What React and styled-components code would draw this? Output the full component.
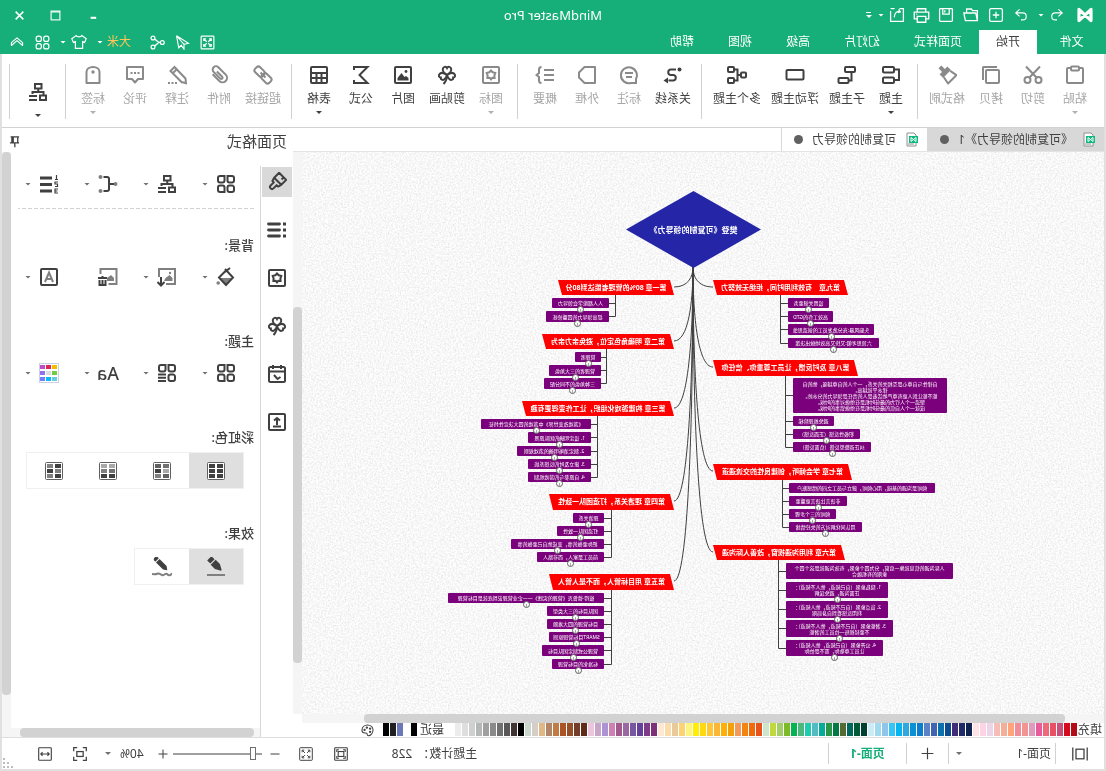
import React, { useState } from "react";
import styled, { createGlobalStyle, css } from "styled-components";

const GREEN = "#16ae79";
const INK = "#404040";
const FONT = '"Noto Sans", "Noto Sans CJK SC", sans-serif';

const GlobalStyle = createGlobalStyle`
  * { box-sizing: border-box; }
  body { margin: 0; background: #ffffff; }
  button, select, input { font: inherit; color: inherit; }
  button { border: 0; padding: 0; background: none; cursor: pointer; }
`;

/* the whole window is flipped, like in a selfie recording */
const Window = styled.div`
  display: flex;
  flex-direction: column;
  min-height: 100vh;
  transform: scaleX(-1);
  background: #ffffff;
  color: ${INK};
  font-family: ${FONT};
  font-size: 12px;
  line-height: 16px;
`;

/* ---------- icons, all on a 20 x 20 grid ---------- */

const Svg = styled.svg`
  display: block;
  flex: none;
  width: ${p => p.$size || 20}px;
  height: ${p => p.$size || 20}px;
  fill: none;
  stroke: currentColor;
  stroke-width: ${p => p.$stroke || 2};
  .f { fill: currentColor; stroke: none; }
  .g { fill: #808080; stroke: none; }
  .gs { stroke: #808080; }
`;

const clover = (
  <>
    <path d="M10 10C7 8 5.500 6 5.800 4c.4-2.400 3.200-3 4.200-1 1-2 3.800-1.400 4.200 1 .3 2-1.200 4-4.200 6z" />
    <path d="M10 10c-2.600-2-5.400-2.600-7-1.400-2 1.600-1 4 .8 4-.4 2 2 3 3.600 1.700C9 13 9.700 11.600 10 10z" />
    <path d="M10 10c2.600-2 5.400-2.600 7-1.400 2 1.600 1 4-.8 4 .4 2-2 3-3.600 1.700C11 13 10.300 11.600 10 10z" />
    <path d="M10 10c0 4 1 6.500 3.500 9" />
  </>
);

const flower = (
  <path d="M10 5.500l1.700 1.800 2.600.6-.9 2.400.2 2.600-2.300-.2L10 14.400l-1.300-1.700-2.300.2.2-2.600-.9-2.400 2.600-.6z" />
);

const grid4 = (
  <>
    <path d="M4 2h4.500v4.500a2 2 0 0 1-2 2H4a2 2 0 0 1-2-2V4a2 2 0 0 1 2-2z" />
    <path d="M11.500 2H16a2 2 0 0 1 2 2v2.500a2 2 0 0 1-2 2h-2.500a2 2 0 0 1-2-2z" />
    <path d="M4 11.500h2.500a2 2 0 0 1 2 2V16a2 2 0 0 1-2 2H4a2 2 0 0 1-2-2v-2.500a2 2 0 0 1 2-2z" />
    <path d="M13.500 11.500H16a2 2 0 0 1 2 2V16a2 2 0 0 1-2 2h-4.500v-4.500a2 2 0 0 1 2-2z" />
  </>
);

const arrows4 = (
  <path d="M5 5l3.500 3.500M15 5l-3.500 3.500M5 15l3.500-3.500M15 15l-3.500-3.500" />
);

const ICONS = {
  logo: <path d="M2.500 3v14L17.500 3v14L2.500 3z" strokeLinejoin="round" />,
  undo: <path d="M8 2L2.500 7 8 12M3 7h9.500a5 5 0 0 1 0 10H10" />,
  redo: <path d="M12 2l5.500 5-5.500 5M17 7H7.500a5 5 0 0 0 0 10H10" />,
  add: <><rect x="2" y="2" width="16" height="16" rx="2" /><path d="M10 6v8M6 10h8" /></>,
  folder: <path d="M2 17V4.500h6l1.500-2h6V7M2 17L4 7.500h15L17 17z" />,
  save: <><rect x="2" y="2" width="16" height="16" rx="1" /><path d="M6 2v7h8V2M11.500 4v3" /></>,
  print: <><path d="M5 6V2h10v4M5 14H1.500V6h17v8H15" /><path d="M5 11h10v7H5zM15 8.500h1" /></>,
  exportFile: <path d="M7 2H2v16h16V5M18 2h-5M8 3L6 6l3 1M6.500 6c4-1 6.500 1.500 7 7" />,
  fullscreen: <><rect x="1.500" y="1.500" width="17" height="17" rx="1" /><path d="M5 8V5h3M12 5h3v3M15 12v3h-3M8 15H5v-3M5 5l4 4M15 5l-4 4M15 15l-4-4M5 15l4-4" /></>,
  send: <path d="M18 1L2 11l6 1.500L18 1zM18 1l-3 16-4-4M8 12.500V19l3.500-5" />,
  share: <><circle cx="16" cy="4" r="2.600" /><circle cx="3.600" cy="10" r="2.600" /><circle cx="16" cy="16" r="2.600" /><path d="M6.200 10c5 0 3.500-3 8-4.500M6.200 10c5 0 3.500 3 8 4.500" /></>,
  shirt: <path d="M6.500 2L1 6l2 4.500 2.500-1V18h9V9.500l2.500 1L19 6l-5.500-4c-1 2-6 2-7 0z" />,
  apps: <><rect x="1.500" y="1.500" width="7" height="7" rx="3" /><rect x="11.500" y="1.500" width="7" height="7" rx="3" /><rect x="1.500" y="11.500" width="7" height="7" rx="3" /><rect x="11.500" y="11.500" width="7" height="7" rx="3" /></>,
  collapse: <path d="M2 11l8-7 8 7v4l-8-7-8 7z" strokeLinejoin="round" />,
  min: <path d="M4 14h8" strokeWidth="3" />,
  max: <><rect x="2" y="2" width="16" height="16" /><path d="M2 3.500h16" /></>,
  close: <path d="M3 3l14 14M17 3L3 17" />,

  paste: <><path d="M6 3H3a1 1 0 0 0-1 1v13a1 1 0 0 0 1 1h14a1 1 0 0 0 1-1V4a1 1 0 0 0-1-1h-3" /><rect x="6" y="1.500" width="8" height="4" rx="1" /></>,
  cut: <><circle cx="4.500" cy="15" r="3" /><circle cx="15.500" cy="15" r="3" /><path d="M3 1.500l10.500 11M17 1.500L6.500 12.500" /></>,
  copy: <><rect x="2" y="5" width="13" height="13" rx="1" /><path d="M4 2h13.500a.5.500 0 0 1 .5.500V15" /></>,
  brush: <g transform="rotate(45 10 9)"><path className="f" d="M8 -1h4v5h3.500v5h-11V4H8z" /><path d="M5.500 9L4 16.500h12L14.500 9" strokeLinejoin="round" /></g>,
  topic: <><rect x="7" y="2" width="11" height="5.500" rx="1" /><rect x="7" y="12.500" width="11" height="5.500" rx="1" /><path d="M7 4.500H2v10.500h5" /></>,
  subtopic: <><rect x="2" y="2" width="10" height="5" rx="1" /><rect x="8.500" y="13" width="10" height="5" rx="1" /><path d="M5.500 7v8.500h3" /></>,
  floating: <rect x="1.500" y="5" width="17" height="9.500" rx="1" />,
  multi: <><rect x="1" y="7.500" width="5" height="5" rx="1" /><rect x="13" y="2" width="6" height="5" rx="1" /><rect x="13" y="13" width="6" height="5" rx="1" /><path d="M6 10h3.500M13 4.500H9.500v11H13" /></>,
  relation: <><circle className="f" cx="3.500" cy="4.500" r="2" /><path d="M7 4.500h5.500a2.800 2.800 0 0 1 0 5.500h-3a2.800 2.800 0 0 0 0 5.500h5" /><path className="f" d="M15 12.500l4.500 3-4.500 3z" /></>,
  callout: <><path d="M3 18v-4a8 8 0 1 1 5 4z" /><path d="M6 8h8M7 12h6" /></>,
  boundary: <path d="M2 2h10.500L18 7.500v5L12.500 18H2z" strokeLinejoin="round" />,
  summary: <><path d="M1 5h10M1 10h10M1 15h10" /><path d="M13.500 2c2 0 2.500.6 2.500 2.500V8l2.500 2-2.500 2v3.500c0 1.900-.5 2.500-2.500 2.500" /></>,
  sticker: <><rect x="2" y="2" width="16" height="16" rx="1" />{flower}</>,
  clipart: clover,
  picture: <><rect x="2" y="2" width="16" height="16" rx="1" /><path className="f" d="M4.500 15.500V13l2.500-2 1.500 1 3-4 4 5v2.500z" /><circle className="f" cx="7" cy="6.500" r="1.400" /></>,
  formula: <path d="M17 5V2H3.500l8 8-8 8H17v-3" />,
  table: <><rect x="2" y="2" width="16" height="16" rx="1" /><path d="M2 8h16M2 13h16M7.500 8v10M12.500 8v10" /></>,
  link: <g transform="rotate(-45 10 10)"><rect x="0" y="6.500" width="10.500" height="7" rx="2.500" /><rect x="9.500" y="6.500" width="10.500" height="7" rx="2.500" /><path d="M6.500 10h7" /></g>,
  clip: <g transform="rotate(45 10 10)"><path d="M14 5v9.500a4.500 4.500 0 0 1-9 0V4a3.300 3.300 0 0 1 6.600 0v9.500a1.300 1.300 0 0 1-2.600 0V6" /></g>,
  note: <><path d="M1.500 13.500L12.500 2l4 4L5.500 17l-4.500 1.200z" /><path d="M10.500 4.500l4 4" /><path d="M10 18h2M13.500 18h2M17 18h2" /></>,
  comment: <><path d="M2 2h16v12h-5l-3 3.500L7 14H2z" strokeLinejoin="round" /><path className="f" d="M5.500 7h2v2h-2zM9 7h2v2H9zM12.500 7h2v2h-2z" /></>,
  tag: <><path d="M3.500 18V7c0-3 3-5 6.500-5s6.500 2 6.500 5v11z" strokeLinejoin="round" /><circle className="f" cx="10" cy="7" r="1.700" /></>,
  org: <><rect x="6.500" y="2" width="6.500" height="4.500" /><path d="M9.750 6.500V10M4.500 13v-3h11v2M11 14h8M11 18h8" /><rect x="2" y="13.500" width="6" height="4.500" /></>,

  format: <g transform="rotate(-45 10 10)"><path d="M5 2h10v7H5zM5 9l1 3.500h2V17a2 2 0 0 0 4 0v-4.500h2L15 9M8.500 2v3" strokeLinejoin="round" /></g>,
  outline: <><path d="M7.500 4h11M7.500 10h11M7.500 16h11" strokeWidth="2.800" strokeLinecap="round" /><path d="M1 4h3M1 10h3M1 16h3" strokeWidth="2.800" /></>,
  calendar: <><rect x="2" y="3" width="16" height="15" rx="1.500" /><path d="M2 7.500h16M6 1v4M14 1v4M13 11l-3.500 4-3-2" /></>,
  upload: <><rect x="2" y="2" width="16" height="16" rx="1" /><path d="M10 13V6M7 8.500L10 6l3 2.500M6 14.500h8" /></>,
  grid4,
  branch: <><circle className="g" cx="2.500" cy="10" r="2" /><circle className="g" cx="17.500" cy="3" r="2" /><circle className="g" cx="17.500" cy="17" r="2" /><path d="M4 10h5M14.500 3H11c-1.300 0-2 .7-2 2v10c0 1.300.7 2 2 2h3.500" /></>,
  numbers: <><path d="M7 4h12M7 10.500h12M7 17h12" strokeWidth="2.800" /><path d="M2.500 1v4.500M1 5.500h3M1 8h3v2H1.500v2.500H4M1 15h3v4H1M1.500 17H4" strokeWidth="1.200" /></>,
  bucket: <><path className="g" d="M4 11h12l-6 7z" /><path d="M9.500 3L17 10.500 10 18l-7-7.500L11 2M6 1l6.500 5" /><circle className="g" cx="17.800" cy="16" r="1.800" /></>,
  bgImage: <><path className="gs" d="M11 17h-9V2h16v8" /><path className="g" d="M4.500 14V11l3-3 4 3 1.500 3z" /><circle className="g" cx="7" cy="6" r="1.200" /><path d="M16 10v8M12.500 15l3.500 3.500 3.500-3.500" /></>,
  bgDelete: <><path className="gs" d="M9.500 17H1.500V2h16v5" /><path className="g" d="M4 14V11l3-3 4 3v3z" /><path d="M11 11h9M15.500 11V9M12.500 13v5h6v-5M15.500 13v5" /></>,
  watermark: <><rect x="2" y="2" width="16" height="16" rx="1" /><path className="gs" d="M6 15l4-9.500L14 15M7.500 12h5" /></>,
  themeList: <><path d="M4 2h4.500v4.500a2 2 0 0 1-2 2H4a2 2 0 0 1-2-2V4a2 2 0 0 1 2-2z" /><path d="M11.500 2H16a2 2 0 0 1 2 2v2.500a2 2 0 0 1-2 2h-2.500a2 2 0 0 1-2-2z" /><path d="M4 11.500h2.500a2 2 0 0 1 2 2V16a2 2 0 0 1-2 2H4a2 2 0 0 1-2-2v-2.500a2 2 0 0 1 2-2z" /><path d="M11 11.500h8M11 14.800h8M11 18h8" /></>,
  penLine: <><g transform="rotate(45 10 8)"><path className="f" d="M7 -1.500h6V3H7zM6.500 4h7v6l-3 5.500h-1L6.500 10z" /></g><path className="gs" d="M1 18h18" /></>,
  pencilWave: <><g transform="rotate(45 10 8)"><path className="f" d="M7.500 1V0a2.500 2.500 0 0 1 5 0v1zM7.500 2h5v10L10 15.500 7.500 12z" /></g><path className="gs" d="M0 16c1 2.500 3 3 5 1 1.500-1.500 2.500 2 5 1 2-.8 2.500-2 4-1.500s2 1 6 .5" /></>,
  pin: <><path d="M3 3h13M5 3v9h8V3M3 12h14M9.500 12v7" /><path className="f" d="M11 3h4v9h-4z" /></>,
  palette: <><path d="M10 1.500c-5 0-8.500 3.500-8.500 8s3.500 8.500 7.500 8.500c2 0 1-2.500 2-3.500 1.500-1.500 7.500 1 7.500-5 0-5-4-8-8.500-8z" /><circle cx="6" cy="7" r="1" /><circle cx="11" cy="5.500" r="1" /><circle cx="14.500" cy="9" r="1" /><circle cx="6" cy="12" r="1" /></>,
  slides: <><path d="M1 2v16M19 2v16" /><rect x="5" y="4" width="10" height="12" /></>,
  plus: <path d="M10 1v18M1 10h18" />,
  minus: <path d="M1 10h18" />,
  fit: <><rect x="1" y="1" width="18" height="18" rx="1" /><rect x="6" y="6.500" width="8" height="7" /><path d="M4 7V4h3M13 4h3v3M16 13v3h-3M7 16H4v-3" /></>,
  expand: <><rect x="1" y="1" width="18" height="18" rx="1" />{arrows4}<path d="M4.500 7.500v-3h3M12.500 4.500h3v3M15.500 12.500v3h-3M7.500 15.500h-3v-3" /></>,
  focus: <><path d="M1 6V1h5M14 1h5v5M19 14v5h-5M6 19H1v-5" /><rect x="5.500" y="6.500" width="9" height="7" /></>,
  fitWidth: <><rect x="1" y="1" width="18" height="18" rx="1" /><path d="M4 10h12M6.500 7.500L4 10l2.500 2.500M13.500 7.500L16 10l-2.500 2.500" /></>,
};

const Icon = ({ name, size, stroke }) => (
  <Svg viewBox="0 0 20 20" $size={size} $stroke={stroke} aria-hidden="true">{ICONS[name]}</Svg>
);

const Caret = styled.span`
  flex: none;
  width: 6px;
  height: 3px;
  background: ${p => p.$color || "#707070"};
  clip-path: polygon(0 0, 100% 0, 50% 100%);
`;

/* ---------- title bar and menu ---------- */

const Header = styled.header`
  background: ${GREEN};
  color: #ffffff;
`;

const TitleRow = styled.div`
  display: grid;
  grid-template-columns: 1fr auto 1fr;
  align-items: center;
  height: 30px;
`;

const QuickBar = styled.div`
  display: flex;
  align-items: center;
  padding-left: 13px;
`;

const Logo = styled.div`
  margin-right: 8px;
`;

const IconButton = styled.button`
  display: flex;
  align-items: center;
  justify-content: center;
  width: 25px;
  height: 22px;
`;

const CaretButton = styled(IconButton)`
  flex-direction: column;
  gap: 2px;
  width: 8px;
  margin-right: ${p => (p.$tight ? 4 : 3)}px;
`;

const ToolButton = styled(IconButton)`
  width: 24px;
`;

const MoreLine = styled.span`
  width: 5px;
  height: 1px;
  background: #ffffff;
`;

const Title = styled.h1`
  margin: 0;
  font-size: 13px;
  font-weight: 400;
`;

const WindowButtons = styled.div`
  display: flex;
  justify-content: flex-end;
  padding-right: 2px;
  button { width: 36px; }
`;

const MenuRow = styled.nav`
  display: flex;
  height: 24px;
  padding-right: 5px;
`;

const MenuTab = styled.button`
  padding: 0 17px;
  background: ${p => (p.$active ? "#ffffff" : "transparent")};
  color: ${p => (p.$active ? INK : "#ffffff")};
  &:first-child { width: 69px; }
`;

const MenuTools = styled.div`
  display: flex;
  align-items: center;
  margin-left: auto;
`;

const Account = styled.button`
  padding: 0 3px 0 14px;
  color: #ffc658;
`;

/* ---------- ribbon ---------- */

const Frame = styled.div`
  display: flex;
  flex: 1;
  flex-direction: column;
  border: 2px solid #e0e0e0;
  border-top: 0;
`;

const Ribbon = styled.div`
  display: flex;
  height: 74px;
  padding: 10px 0 8px 8px;
  border-bottom: 1px solid #d2d2d2;
`;

const RibbonGroup = styled.div`
  display: flex;
  &::after {
    content: "";
    width: 1px;
    margin: 0 5px 0 6px;
    background: #d2d2d2;
  }
`;

const RibbonButton = styled.button`
  display: flex;
  flex-direction: column;
  align-items: center;
  gap: 6px;
  width: ${p => ({ 2: 42, 3: 46, 4: 58 })[p.$chars] || 44}px;
  padding-top: ${p => (p.$chars ? 1 : 18)}px;
  white-space: nowrap;
  color: ${p => (p.$off ? "#a6a6a6" : INK)};
  svg { color: ${p => (p.$off ? "#8a8a8a" : INK)}; }
  ${Caret} { margin-top: ${p => (p.$chars ? -2 : 6)}px; }
`;

/* ---------- documents and canvas ---------- */

const Main = styled.div`
  display: flex;
  flex: 1;
`;

const Editor = styled.main`
  display: flex;
  flex: 1;
  flex-direction: column;
  min-width: 0;
`;

const DocTabs = styled.div`
  display: flex;
  height: 24px;
  border-bottom: 1px solid #e4e4e4;
`;

const DocTab = styled.button`
  display: flex;
  align-items: center;
  gap: 9px;
  padding: 0 12px 0 8px;
  background: ${p => (p.$active ? "#d8d8d8" : "#ffffff")};
  border-right: 1px solid #d8d8d8;
  i {
    width: 9px;
    height: 9px;
    border-radius: 50%;
    background: #606060;
  }
`;

const CanvasRow = styled.div`
  display: flex;
  flex: 1;
`;

const Canvas = styled.div`
  position: relative;
  flex: 1;
  overflow: hidden;
  background: #f6f6f6;
`;

const Layer = styled.svg`
  position: absolute;
  inset: 0;
  width: 100%;
  height: 100%;
`;

const VScroll = styled.div`
  display: flex;
  flex-direction: column;
  width: 9px;
  padding: ${p => p.$pad};
  background: #f5f5f5;
`;

const HScroll = styled.div`
  display: flex;
  height: 9px;
  margin-right: ${p => p.$corner || 0}px;
  padding: ${p => p.$pad};
  background: #f5f5f5;
`;

const Thumb = styled.div`
  flex: 1;
  border-radius: 4px;
  background: #d2d2d2;
`;

const nodeBox = css`
  position: absolute;
  display: flex;
  flex-direction: column;
  align-items: center;
  justify-content: center;
  left: ${p => p.$x}px;
  top: ${p => p.$y}px;
  width: ${p => p.$w}px;
  height: ${p => p.$h}px;
  color: #ffffff;
  white-space: nowrap;
`;

const Root = styled.div`
  ${nodeBox}
  background: #2525a8;
  clip-path: polygon(50% 0, 100% 50%, 50% 100%, 0 50%);
  font-size: 8px;
  font-weight: 700;
`;

const Chapter = styled.div`
  ${nodeBox}
  background: #ff0000;
  clip-path: polygon(0 0, calc(100% - 4px) 0, 100% 100%, 4px 100%);
  clip-path: polygon(4px 0, 100% 0, calc(100% - 4px) 100%, 0 100%);
  font-size: 7px;
  font-weight: 700;
`;

const Leaf = styled.div`
  ${nodeBox}
  border-radius: 1px;
  background: #7b007b;
  font-size: 5px;
  line-height: 6px;
`;

const Fold = styled.button`
  position: absolute;
  bottom: -5px;
  left: 50%;
  width: 7px;
  height: 7px;
  margin-left: -4px;
  border: 1px solid #606060;
  border-radius: 50%;
  background: #ffffff;
  z-index: 1;
  &::after {
    content: "";
    display: block;
    width: 1px;
    height: 3px;
    margin: 1px auto 0;
    background: #a8a8a8;
  }
`;

const PaletteRow = styled.div`
  display: flex;
  height: 14px;
  padding-left: 2px;
  line-height: 14px;
`;

const Swatches = styled.div`
  display: flex;
  gap: 1px;
  margin: 0 ${p => p.$end || 0}px 0 ${p => p.$start || 0}px;
`;

const Swatch = styled.button`
  width: 6px;
  height: 13px;
  background: ${p => p.$color};
`;

/* ---------- format panel ---------- */

const Panel = styled.aside`
  display: flex;
  flex-direction: column;
  width: 291px;
`;

const PanelHead = styled.div`
  display: flex;
  align-items: center;
  justify-content: space-between;
  height: 24px;
  padding: 2px 6px 0 6px;
  h2 {
    margin: 0;
    font-size: 15px;
    font-weight: 400;
  }
`;

const PanelBody = styled.div`
  display: flex;
  flex: 1;
`;

const SideTabs = styled.div`
  display: flex;
  flex-direction: column;
  gap: 18px;
  width: 33px;
  margin-top: 14px;
  padding: 1px 1px 0 1px;
  border-right: 1px solid #d8d8d8;
`;

const SideTab = styled.button`
  display: flex;
  align-items: center;
  justify-content: center;
  height: 30px;
  background: ${p => (p.$active ? "#d9d9d9" : "transparent")};
`;

const PanelContent = styled.div`
  display: flex;
  flex: 1;
  flex-direction: column;
`;

const Sections = styled.div`
  flex: 1;
  padding: 22px 7px 0 6px;
`;

const Divider = styled.hr`
  height: 1px;
  margin: 14px 0 26px;
  border: 0;
  background: repeating-linear-gradient(90deg, #d2d2d2 0 4px, transparent 4px 6px);
`;

const Section = styled.section`
  min-height: 96px;
  h3 {
    margin: 0;
    font-size: 13px;
    font-weight: 500;
    line-height: 20px;
  }
`;

const ToolRow = styled.div`
  display: grid;
  grid-template-columns: repeat(4, 59px);
  ${Section} & { margin-top: 12px; }
`;

const Tool = styled.button`
  display: flex;
  align-items: center;
  gap: 8px;
  height: 20px;
  padding-left: 18px;
`;

const FontSample = styled.span`
  width: 20px;
  display: flex;
  justify-content: center;
  font-size: 18px;
  font-weight: 500;
  line-height: 20px;
`;

const Colors = styled.span`
  display: grid;
  grid-template-columns: repeat(3, 5px);
  grid-auto-rows: 4px;
  gap: 2px 1px;
  width: 20px;
  height: 20px;
  padding: 1px;
  border: 1px solid #ccd0e4;
  i { background: currentColor; }
`;

const Segmented = styled.div`
  display: inline-flex;
  margin: 5px 0 0 10px;
  border: 1px solid #f0f0f0;
`;

const Segment = styled.button`
  display: flex;
  align-items: center;
  justify-content: center;
  width: 54px;
  height: 35px;
  background: ${p => (p.$active ? "#dfdfdf" : "#ffffff")};
`;

/* ---------- status bar ---------- */

const StatusBar = styled.footer`
  position: relative;
  display: flex;
  align-items: center;
  height: 32px;
  border-top: 1px solid #dedede;
  padding-right: 36px;
`;

const StatusCell = styled.div`
  display: flex;
  align-items: center;
  width: ${p => p.$w}px;
  height: 21px;
  border-right: 1px solid #d2d2d2;
  > button { flex: 1; display: flex; justify-content: center; }
`;

const PageSelect = styled.select`
  flex: 1;
  appearance: none;
  border: 0;
  padding: 0 0 0 4px;
  background: transparent;
  outline: none;
`;

const PageTab = styled.button`
  color: ${GREEN};
  font-weight: 700;
`;

const ZoomTools = styled.div`
  display: flex;
  align-items: center;
  margin-left: auto;
`;

const Count = styled.span`
  margin-right: 44px;
  b { margin-left: 5px; font-weight: 400; }
`;

const StatusButton = styled.button`
  display: flex;
  align-items: center;
  gap: 9px;
  margin-right: ${p => p.$gap || 0}px;
`;

const Range = styled.input`
  appearance: none;
  width: 89px;
  height: 13px;
  margin: 0 5px 0 0;
  background: linear-gradient(#a0a0a0, #a0a0a0) center / 100% 2px no-repeat;
  &::-webkit-slider-thumb {
    appearance: none;
    width: 6px;
    height: 13px;
    border: 1px solid #707070;
    background: #ffffff;
  }
`;

const Grip = styled.svg`
  position: absolute;
  right: 1px;
  bottom: 1px;
  fill: #bdbdbd;
`;

/* ---------- data ---------- */

const GROUPS = [
  [["paste", "粘贴", 1, 1], ["cut", "剪切", 1], ["copy", "拷贝", 1], ["brush", "格式刷", 1]],
  [["topic", "主题", 0, 1], ["subtopic", "子主题"], ["floating", "浮动主题"], ["multi", "多个主题"]],
  [["relation", "关系线"], ["callout", "标注", 1], ["boundary", "外框", 1], ["summary", "概要", 1]],
  [["sticker", "图标", 1, 1], ["clipart", "剪贴画"], ["picture", "图片"], ["formula", "公式"], ["table", "表格", 0, 1]],
  [["link", "超链接", 1], ["clip", "附件", 1], ["note", "注释", 1], ["comment", "评论", 1], ["tag", "标签", 1, 1]],
  [["org", "", 0, 1]],
];

// chapter box, spine x, then leaves: top, width, height, lines, has fold button
const CHAPTERS = [
  { side: "r", x: 430, y: 128, w: 116, h: 15, title: "第一章 80%的管理者能达到80分", spine: 488, edge: 495, leaves: [
    [146, 57, 10, ["人人都能学会领导力"], 1],
    [159, 63, 11, ["提高领导力的四重修炼"], 1],
  ] },
  { side: "r", x: 430, y: 182, w: 132, h: 15, title: "第二章 明确角色定位，避免亲力亲为", spine: 497, edge: 503, leaves: [
    [200, 26, 10, ["管理者"], 1],
    [213, 52, 11, ["管理者的三大角色"], 1],
    [226, 57, 11, ["三种角色的不同分配"], 1],
  ] },
  { side: "r", x: 430, y: 249, w: 152, h: 15, title: "第三章 构建游戏化组织，让工作变得更有趣", spine: 506, edge: 513, leaves: [
    [267, 110, 10, ["《游戏改变世界》中游戏的四大决定性特征"], 1],
    [280, 63, 11, ["1. 设定明确的团队愿景"], 1],
    [294, 74, 10, ["2. 制定清晰明确的游戏规则"], 1],
    [307, 63, 10, ["3. 建立及时的反馈系统"], 1],
    [320, 63, 10, ["4. 自愿参与的游戏机制"], 1],
  ] },
  { side: "r", x: 430, y: 342, w: 125, h: 16, title: "第四章 理清关系，打造团队一致性", spine: 492, edge: 500, leaves: [
    [361, 31, 10, ["理清关系"], 1],
    [374, 47, 10, ["打造团队一致性"], 1],
    [387, 93, 10, ["把你要做的事，变成他自己要做的事"], 1],
    [400, 67, 10, ["前员工是家人，而非路人"], 1],
  ] },
  { side: "r", x: 430, y: 422, w: 125, h: 16, title: "第五章 用目标管人，而不是人管人", spine: 492, edge: 500, leaves: [
    [441, 156, 10, ["彼得·德鲁克《管理的实践》——企业管理说到底就是目标管理"], 1],
    [454, 57, 10, ["团队目标的三大类型"], 1],
    [467, 57, 10, ["目标管理的四大难题"], 1],
    [480, 55, 10, ["SMART目标管理原则"], 1],
    [493, 62, 11, ["管理公式制定团队目标"], 1],
    [507, 52, 10, ["标准化的目标管理"], 1],
  ] },
  { side: "l", x: 256, y: 128, w: 135, h: 15, title: "第九章　有效利用时间，拒绝无效努力", spine: 323, edge: 316, leaves: [
    [146, 41, 10, ["设置关键要务"], 1],
    [159, 45, 11, ["高效工作的GTD"], 1],
    [172, 86, 11, ["头脑风暴:充分激发员工的创造思维"], 1],
    [186, 91, 10, ["六顶思考帽:又快又高效地做出决策"], 1],
  ] },
  { side: "l", x: 246, y: 208, w: 145, h: 16, title: "第八章 及时反馈，让员工尊重你、信任你", spine: 318, edge: 311, leaves: [
    [226, 154, 35, ["自律性与自尊心是互相关的关系，一个人的自尊越强，他的自", "律水平就越高。", "能不能让别人更有尊严地活着是人的责任是领导力的分水岭。", "塑造一个人行为的最佳时机是在他做对事的时候。", "成就一个人自信的最佳时机是在他做错事的时候。"], 0],
    [264, 41, 10, ["避免推理阶梯"], 1],
    [277, 67, 10, ["积极性反馈（正面反馈）"], 1],
    [290, 78, 10, ["纠正调整型反馈（负面反馈）"], 1],
  ] },
  { side: "l", x: 252, y: 312, w: 139, h: 16, title: "第七章 学会倾听，创建良性的交流通道", spine: 321, edge: 315, leaves: [
    [331, 146, 10, ["倾听是沟通的基础，用心倾听，建立与员工之间的情感账户"], 0],
    [344, 58, 10, ["非语言比语言更重要"], 1],
    [357, 47, 10, ["倾听的三个步骤"], 1],
    [370, 73, 10, ["用认同化解对方的失控情绪"], 1],
  ] },
  { side: "l", x: 259, y: 393, w: 132, h: 15, title: "第六章 利用沟通视窗，改善人际沟通", spine: 325, edge: 318, leaves: [
    [411, 167, 16, ["人际沟通的信息就像一扇窗，分为四个象限，有效沟通就是这个四个", "象限的有机融合"], 0],
    [430, 102, 16, ["1. 隐私象限（自己知道，他人不知道）：", "正面沟通，避免误解"], 1],
    [449, 102, 17, ["2. 盲点象限（自己不知道，他人知道）：", "利用反馈看到自身局限"], 1],
    [468, 107, 17, ["3. 潜能象限（自己不知道，他人不知道）：", "不要轻视每一位员工的潜能"], 1],
    [488, 97, 16, ["4. 公开象限（自己知道，他人知道）：", "让员工尊敬你，而不是怕你"], 1],
  ] },
];

const SWATCHES = (
  "b30b17 d30b1d c8507a e85065 ee6a78 e85c9c e09abb f29490 f18c9b ffa37c f4ad96 f5bcb8 ead6e8 fcd4e4 fde2e8 " +
  "0f2350 1f2b68 402c77 0b4c91 0c6fae 4065b0 5a82c4 0d7ecd 0c90d5 2fa8e0 07b4f0 33c6f6 90c4e8 a1d9ee cdebf5 " +
  "004032 005a36 00695c 556b32 037a46 29964a 04ac9c 52bcc2 1ecdb0 4db87c 06b354 7db928 a3cf68 bfd93e cce5cb " +
  "e8521c f06a0a f28413 f39a5a f3a00d ffb006 fcb637 fdc738 ffd814 ffee04 fdf380 fdd272 e9c89a fddcab fce8d4 " +
  "7d3178 7e3c88 65419a 7757a0 9c68a2 a25a8e cf80b4 ac94d2 c8a6cc ecc4dc " +
  "5e2c18 743c2a 974f2a ab5426 c07a42 b38568 e0b886 d5cdc8 cbd6cc " +
  "000000 403532 585858 707070 8a8a8a a0a0a0 b4b8b6 cfcfcf dedede ececec"
).split(" ");

const RAINBOW = [
  ["#404040", "#404040", "#404040", "#404040", "#404040", "#404040"],
  ["#707070", "#606060", "#a8a8a8", "#404040", "#606060", "#808080"],
  ["#a8a8a8", "#a8a8a8", "#707070", "#808080", "#404040", "#404040"],
  ["#404040", "#808080", "#808080", "#404040", "#404040", "#808080"],
];

const THEME_COLORS = ["#eec000", "#dc2850", "#c04cc8", "#70cc40", "#dcdcdc", "#9070f0", "#68cce0", "#08b8f8", "#7080ff"];

/* ---------- pieces ---------- */

const RainbowIcon = ({ colors }) => (
  <svg width="18" height="18" viewBox="0 0 18 18" aria-hidden="true">
    <rect x="0.500" y="0.500" width="17" height="17" rx="1" fill="#ffffff" stroke="#606060" />
    {colors.map((c, i) => (
      <rect key={i} x={2 + (i % 2) * 8} y={2 + Math.floor(i / 2) * 5} width="6" height="4" fill={c} />
    ))}
  </svg>
);

const DocIcon = () => (
  <svg width="14" height="15" viewBox="0 0 14 15" aria-hidden="true">
    <path d="M5 1h7v13H3V3z" fill="#ffffff" stroke="#909090" />
    <path d="M5 12h6" stroke="#909090" />
    <rect x="1" y="4" width="9" height="7" fill="#10b880" />
    <path d="M3 5.500v4l5-4v4l-5-4" fill="none" stroke="#ffffff" />
  </svg>
);

const MindMap = () => (
  <Canvas>
    <Layer aria-hidden="true">
      <filter id="paper" x="0" y="0" width="100%" height="100%" colorInterpolationFilters="sRGB">
        <feTurbulence type="fractalNoise" baseFrequency="0.600" numOctaves="3" seed="4" />
        <feColorMatrix values="0.180 0 0 0 0.880  0.180 0 0 0 0.880  0.180 0 0 0 0.880  0 0 0 0 1" />
      </filter>
      <rect width="100%" height="100%" filter="url(#paper)" />
    </Layer>
    <Layer fill="none" stroke="#404040" aria-hidden="true">
      {CHAPTERS.map(c => {
        const end = c.side === "r" ? c.x : c.x + c.w;
        const mid = c.y + 7;
        const bend = c.side === "r" ? 416 : 406;
        return <path key={c.title} d={`M411 115C411 ${115 + (mid - 115) / 2} ${bend} ${mid} ${end} ${mid}`} />;
      })}
      {CHAPTERS.map(c => {
        const mids = c.leaves.map(l => l[0] + Math.floor(l[2] / 2) + 0.5);
        const x = c.spine + 0.5;
        const arms = mids.map(m => `M${x} ${m}H${c.edge}`).join("");
        return <path key={c.title} d={`M${x} ${c.y + c.h}V${mids[mids.length - 1]}${arms}`} />;
      })}
    </Layer>
    <Root $x={343} $y={39} $w={135} $h={77}>樊登《可复制的领导力》</Root>
    {CHAPTERS.map(c => (
      <React.Fragment key={c.title}>
        <Chapter $x={c.x} $y={c.y} $w={c.w} $h={c.h}>{c.title}</Chapter>
        {c.leaves.map(([y, w, h, lines, fold]) => (
          <Leaf key={y} $x={c.side === "r" ? c.edge : c.edge - w} $y={y} $w={w} $h={h}>
            {lines.map(line => <span key={line}>{line}</span>)}
            {fold ? <Fold aria-label="展开" /> : null}
          </Leaf>
        ))}
      </React.Fragment>
    ))}
  </Canvas>
);

const PanelTool = ({ icon, label, noCaret, children }) => (
  <Tool aria-label={label}>
    {children || <Icon name={icon} />}
    {!noCaret && <Caret />}
  </Tool>
);

const App = () => {
  const [menu, setMenu] = useState("开始");
  const [side, setSide] = useState("format");
  const [rainbow, setRainbow] = useState(0);
  const [effect, setEffect] = useState(0);
  const [zoom, setZoom] = useState(7);

  return (
    <Window>
      <GlobalStyle />
      <Header>
        <TitleRow>
          <QuickBar>
            <Logo><Icon name="logo" size={16} stroke={4} /></Logo>
            <ToolButton aria-label="撤销"><Icon name="undo" size={14} stroke={1.6} /></ToolButton>
            <CaretButton $tight aria-label="撤销列表"><Caret $color="#ffffff" /></CaretButton>
            <ToolButton aria-label="重做"><Icon name="redo" size={14} stroke={1.6} /></ToolButton>
            <IconButton aria-label="新建"><Icon name="add" size={16} stroke={1.6} /></IconButton>
            <IconButton aria-label="打开"><Icon name="folder" size={16} stroke={1.6} /></IconButton>
            <IconButton aria-label="保存"><Icon name="save" size={16} stroke={1.6} /></IconButton>
            <IconButton aria-label="打印"><Icon name="print" size={17} stroke={1.6} /></IconButton>
            <ToolButton aria-label="导出"><Icon name="exportFile" size={16} stroke={1.6} /></ToolButton>
            <CaretButton $tight aria-label="导出列表"><Caret $color="#ffffff" /></CaretButton>
            <CaretButton aria-label="自定义"><MoreLine /><Caret $color="#ffffff" /></CaretButton>
          </QuickBar>
          <Title>MindMaster Pro</Title>
          <WindowButtons>
            <IconButton aria-label="最小化"><Icon name="min" size={14} /></IconButton>
            <IconButton aria-label="最大化"><Icon name="max" size={11} /></IconButton>
            <IconButton aria-label="关闭"><Icon name="close" size={11} stroke={2.8} /></IconButton>
          </WindowButtons>
        </TitleRow>
        <MenuRow>
          {["文件", "开始", "页面样式", "幻灯片", "高级", "视图", "帮助"].map(m => (
            <MenuTab key={m} $active={m === menu} onClick={() => setMenu(m)}>{m}</MenuTab>
          ))}
          <MenuTools>
            <IconButton aria-label="全屏"><Icon name="fullscreen" size={15} stroke={1.6} /></IconButton>
            <IconButton aria-label="发送"><Icon name="send" size={15} stroke={1.5} /></IconButton>
            <IconButton aria-label="分享"><Icon name="share" size={15} stroke={1.6} /></IconButton>
            <Account>大米</Account>
            <CaretButton $tight aria-label="账户"><Caret $color="#ffffff" /></CaretButton>
            <IconButton aria-label="主题皮肤"><Icon name="shirt" size={16} stroke={1.5} /></IconButton>
            <CaretButton $tight aria-label="皮肤列表"><Caret $color="#ffffff" /></CaretButton>
            <IconButton aria-label="应用"><Icon name="apps" size={15} stroke={1.6} /></IconButton>
            <IconButton aria-label="收起"><Icon name="collapse" size={14} stroke={1.6} /></IconButton>
          </MenuTools>
        </MenuRow>
      </Header>

      <Frame>
        <Ribbon>
          {GROUPS.map((group, i) => (
            <RibbonGroup key={i}>
              {group.map(([icon, label, off, caret]) => (
                <RibbonButton key={icon} $chars={label.length} $off={off} aria-label={label || "布局"}>
                  <Icon name={icon} />
                  {label}
                  {caret ? <Caret $color={off ? "#b0b0b0" : INK} /> : null}
                </RibbonButton>
              ))}
            </RibbonGroup>
          ))}
        </Ribbon>

        <Main>
          <Editor>
            <DocTabs>
              <DocTab $active><DocIcon />《可复制的领导力》1<i /></DocTab>
              <DocTab><DocIcon />可复制的领导力<i /></DocTab>
            </DocTabs>
            <CanvasRow>
              <MindMap />
              <VScroll $pad="155px 0 51px"><Thumb /></VScroll>
            </CanvasRow>
            <HScroll $corner={9} $pad="0 62px 0 39px"><Thumb /></HScroll>
            <PaletteRow>
              填充
              <Swatches $start={1} $end={11}>
                {SWATCHES.map(c => <Swatch key={c} $color={"#" + c} aria-label={"#" + c} />)}
              </Swatches>
              最近
              <Swatches $start={3} $end={8}><Swatch $color="#000000" aria-label="#000000" /></Swatches>
              <Swatches $end={9}>
                {["#6b78b8", "#202020", "#000000"].map(c => <Swatch key={c} $color={c} aria-label={c} />)}
              </Swatches>
              <StatusButton aria-label="更多颜色"><Icon name="palette" size={13} stroke={1.6} /></StatusButton>
            </PaletteRow>
          </Editor>

          <Panel>
            <PanelHead>
              <h2>页面格式</h2>
              <StatusButton aria-label="固定"><Icon name="pin" size={13} /></StatusButton>
            </PanelHead>
            <PanelBody>
              <SideTabs>
                {["format", "outline", "sticker", "clipart", "calendar", "upload"].map(s => (
                  <SideTab key={s} $active={s === side} onClick={() => setSide(s)} aria-label={s}>
                    <Icon name={s} />
                  </SideTab>
                ))}
              </SideTabs>
              <PanelContent>
                <Sections>
                  <ToolRow>
                    <PanelTool icon="grid4" label="布局" />
                    <PanelTool icon="org" label="结构" />
                    <PanelTool icon="branch" label="连线" />
                    <PanelTool icon="numbers" label="编号" />
                  </ToolRow>
                  <Divider />
                  <Section>
                    <h3>背景:</h3>
                    <ToolRow>
                      <PanelTool icon="bucket" label="背景颜色" />
                      <PanelTool icon="bgImage" label="背景图片" />
                      <PanelTool icon="bgDelete" label="移除图片" noCaret />
                      <PanelTool icon="watermark" label="水印" />
                    </ToolRow>
                  </Section>
                  <Section>
                    <h3>主题:</h3>
                    <ToolRow>
                      <PanelTool icon="grid4" label="主题" />
                      <PanelTool icon="themeList" label="主题样式" />
                      <PanelTool label="主题字体"><FontSample>Aa</FontSample></PanelTool>
                      <PanelTool label="主题颜色">
                        <Colors>{THEME_COLORS.map(c => <i key={c} style={{ color: c }} />)}</Colors>
                      </PanelTool>
                    </ToolRow>
                  </Section>
                  <Section>
                    <h3>彩虹色:</h3>
                    <Segmented>
                      {RAINBOW.map((colors, i) => (
                        <Segment key={i} $active={i === rainbow} onClick={() => setRainbow(i)} aria-label={"彩虹色 " + (i + 1)}>
                          <RainbowIcon colors={colors} />
                        </Segment>
                      ))}
                    </Segmented>
                  </Section>
                  <Section>
                    <h3>效果:</h3>
                    <Segmented>
                      {["penLine", "pencilWave"].map((name, i) => (
                        <Segment key={name} $active={i === effect} onClick={() => setEffect(i)} aria-label={"效果 " + (i + 1)}>
                          <Icon name={name} />
                        </Segment>
                      ))}
                    </Segmented>
                  </Section>
                </Sections>
                <HScroll $pad="0 9px 0 6px"><Thumb /></HScroll>
              </PanelContent>
              <VScroll $pad="0 0 42px"><Thumb /></VScroll>
            </PanelBody>
          </Panel>
        </Main>

        <StatusBar>
          <StatusCell $w={49}><button aria-label="页面视图"><Icon name="slides" size={16} stroke={1.6} /></button></StatusCell>
          <StatusCell $w={107}>
            <PageSelect aria-label="页面"><option>页面-1</option></PageSelect>
            <Caret style={{ marginRight: 7 }} />
          </StatusCell>
          <StatusCell $w={42}><button aria-label="添加页面"><Icon name="plus" size={13} stroke={1.8} /></button></StatusCell>
          <StatusCell $w={78}><PageTab>页面-1</PageTab></StatusCell>
          <ZoomTools>
            <Count>主题计数：<b>228</b></Count>
            <StatusButton $gap={21} aria-label="适合页面"><Icon name="fit" size={14} stroke={1.6} /></StatusButton>
            <StatusButton $gap={19} aria-label="全屏显示"><Icon name="expand" size={14} stroke={1.4} /></StatusButton>
            <StatusButton $gap={8} aria-label="缩小"><Icon name="minus" size={10} /></StatusButton>
            <Range type="range" min="0" max="100" value={zoom} onChange={e => setZoom(Number(e.target.value))} aria-label="缩放" />
            <StatusButton $gap={14} aria-label="放大"><Icon name="plus" size={10} /></StatusButton>
            <StatusButton $gap={18}>40%<Caret /></StatusButton>
            <StatusButton $gap={21} aria-label="聚焦"><Icon name="focus" size={14} stroke={1.8} /></StatusButton>
            <StatusButton aria-label="适合宽度"><Icon name="fitWidth" size={14} stroke={1.6} /></StatusButton>
          </ZoomTools>
          <Grip width="10" height="10" aria-hidden="true">
            <path d="M8 0h2v2H8zM8 4h2v2H8zM4 4h2v2H4zM8 8h2v2H8zM4 8h2v2H4zM0 8h2v2H0z" />
          </Grip>
        </StatusBar>
      </Frame>
    </Window>
  );
};

export default App;
